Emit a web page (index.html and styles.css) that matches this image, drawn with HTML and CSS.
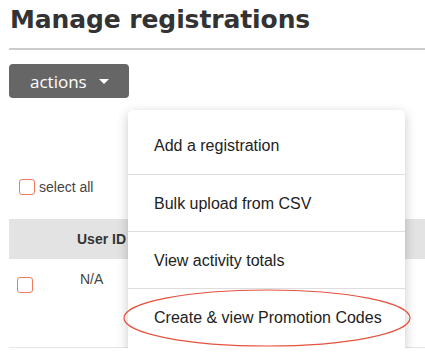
FILE: index.html
```html
<!DOCTYPE html>
<html lang="en">
<head>
  <meta charset="UTF-8">
  <title>Manage registrations</title>
  <link rel="stylesheet" href="styles.css">
</head>
<body>

  <div class="pagina">
    <h1 class="titulo">Manage registrations</h1>

    <div class="acoes">
      <button class="btn-acoes">actions <span class="seta"></span></button>

      <!-- menu aberto -->
      <ul class="menu">
        <li>Add a registration</li>
        <li>Bulk upload from CSV</li>
        <li>View activity totals</li>
        <li class="marcado">
          Create &amp; view Promotion Codes
          <svg class="circulo" viewBox="0 0 288 58" preserveAspectRatio="none">
            <ellipse cx="144" cy="29" rx="143" ry="28" fill="none" stroke="#e5533f" stroke-width="1.2"/>
          </svg>
        </li>
      </ul>
    </div>

    <label class="selecionar">
      <span class="caixa"></span> select all
    </label>

    <table class="tabela">
      <thead>
        <tr>
          <th class="col-check"></th>
          <th>User ID</th>
        </tr>
      </thead>
      <tbody>
        <tr>
          <td class="col-check"><span class="caixa"></span></td>
          <td class="col-id">N/A</td>
        </tr>
      </tbody>
    </table>
  </div>

</body>
</html>
```

FILE: styles.css
```css
body {
  margin: 0;
  font-family: 'Liberation Sans', Arial, sans-serif;
  background-color: #fff;
  color: #333;
  overflow: hidden;
}

.pagina {
  padding: 0 0 0 9px;
}

.titulo {
  margin: 0;
  padding: 5px 0 14px 1px;
  font-family: 'DejaVu Sans', sans-serif;
  font-weight: bold;
  font-size: 25px;
  letter-spacing: -0.1px;
  color: #333;
  border-bottom: 2px solid #ccc;
}

.acoes {
  position: relative;
  margin-top: 14px;
}

.btn-acoes {
  display: flex;
  align-items: center;
  gap: 12px;
  height: 34px;
  padding: 0 20px 0 21px;
  border: none;
  border-radius: 4px;
  background-color: #666;
  color: #fff;
  font-family: 'Open Sans', sans-serif;
  font-size: 17px;
}

.seta {
  width: 0;
  height: 0;
  border-left: 5px solid transparent;
  border-right: 5px solid transparent;
  border-top: 5px solid #fff;
}

.menu {
  position: absolute;
  top: 46px;
  left: 119px;
  width: 277px;
  margin: 0;
  padding: 7px 0;
  list-style: none;
  background: #fff;
  border-radius: 5px;
  box-shadow: 0 3px 12px rgba(0, 0, 0, 0.22);
  z-index: 2;
}

.menu li {
  position: relative;
  height: 57px;
  line-height: 57px;
  padding-left: 26px;
  font-size: 16px;
  color: #222;
  border-top: 1px solid #ddd;
  box-sizing: border-box;
}

.menu li:first-child {
  border-top: none;
}

.circulo {
  position: absolute;
  left: -5px;
  top: 0;
  width: 288px;
  height: 58px;
}

.selecionar {
  display: flex;
  align-items: center;
  gap: 4px;
  margin: 81px 0 0 10px;
  font-size: 14px;
  color: #444;
}

.caixa {
  display: inline-block;
  width: 14px;
  height: 14px;
  border: 1px solid #ef7a60;
  border-radius: 3px;
}

.tabela {
  width: 100%;
  margin-top: 24px;
  border-collapse: collapse;
}

.tabela th,
.tabela td {
  padding: 0;
  box-sizing: border-box;
}

.tabela th {
  height: 40px;
  background: #e3e3e3;
  text-align: left;
  font-size: 14px;
  color: #333;
}

.tabela td {
  height: 88px;
  vertical-align: top;
  padding-top: 12px;
  font-size: 14px;
  color: #444;
  border-bottom: 1px solid #e6e6e6;
}

.tabela .col-check {
  width: 68px;
}

.tabela td.col-check {
  padding: 18px 0 0 8px;
}

.tabela td.col-id {
  padding-left: 3px;
}
```
